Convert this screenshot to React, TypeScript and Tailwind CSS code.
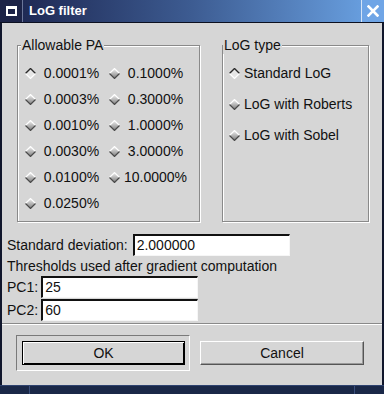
import React from "react";

function Diamond({ on }: { on?: boolean }) {
  return (
    <svg width="11" height="11" viewBox="0 0 11 11" className="shrink-0">
      <defs>
        <linearGradient id="dg" x1="0" y1="0" x2="0" y2="1">
          <stop offset="0" stopColor="#f2f2f2" />
          <stop offset="1" stopColor="#7c7c7c" />
        </linearGradient>
      </defs>
      {on ? (
        <>
          <polygon points="5.5,0.5 10.5,5.5 5.5,10.5 0.5,5.5" fill="#e6e6e6" />
          <polyline points="0.5,5.5 5.5,0.5 10.5,5.5" fill="none" stroke="#2a2a2a" strokeWidth="1.4" />
          <polyline points="0.5,5.5 5.5,10.5 10.5,5.5" fill="none" stroke="#ffffff" strokeWidth="1.2" />
        </>
      ) : (
        <>
          <polygon points="5.5,0.5 10.5,5.5 5.5,10.5 0.5,5.5" fill="url(#dg)" />
          <polyline points="0.5,5.5 5.5,0.5 10.5,5.5" fill="none" stroke="#ffffff" strokeWidth="1.2" />
          <polyline points="0.5,5.5 5.5,10.5 10.5,5.5" fill="none" stroke="#4a4a4a" strokeWidth="1.2" />
        </>
      )}
    </svg>
  );
}

function PaCell({ label, on }: { label: string; on?: boolean }) {
  return (
    <div className="flex items-center h-[26px]">
      <Diamond on={on} />
      <span className="ml-[2px] w-[67px] text-center whitespace-nowrap">{label}</span>
    </div>
  );
}

function TypeRow({ label, on }: { label: string; on?: boolean }) {
  return (
    <div className="flex items-center h-[31px] gap-[4px]">
      <Diamond on={on} />
      <span className="whitespace-nowrap">{label}</span>
    </div>
  );
}

function Field({ value, w }: { value: string; w: string }) {
  return (
    <div
      className={`${w} h-[22px] bg-white border-t-2 border-l-2 border-r border-b border-t-[#111] border-l-[#111] border-r-[#f6f6f6] border-b-[#f6f6f6] pl-[2px] leading-[19px] whitespace-nowrap`}
    >
      {value}
    </div>
  );
}

export default function App() {
  const col1 = ["0.0001%", "0.0003%", "0.0010%", "0.0030%", "0.0100%", "0.0250%"];
  const col2 = ["0.1000%", "0.3000%", "1.0000%", "3.0000%", "10.0000%"];
  return (
    <div className="w-[384px] h-[394px] flex flex-col bg-[#d6d6d6] text-[14px] text-[#111] font-['Liberation_Sans',Arial,sans-serif] overflow-hidden">
      {/* title bar */}
      <div className="h-[23px] flex border-b border-[#0c1020] shrink-0">
        <div className="w-[23px] h-[22px] bg-[#1c2347] border-r border-[#6b7699] flex items-center justify-center">
          <div className="w-[11px] h-[10px] border-2 border-t-[3px] border-white" />
        </div>
        <div className="flex-1 h-[22px] bg-gradient-to-r from-[#1f2a55] via-[#3d5c92] to-[#679ddd] flex items-center pl-[6px] text-white font-bold text-[13px] font-['Liberation_Sans',Arial,sans-serif]">
          LoG filter
        </div>
        <div className="w-[23px] h-[22px] bg-[#6fa5e6] border-l border-[#d6e4f6] flex items-center justify-center">
          <svg width="12" height="12" viewBox="0 0 12 12">
            <path d="M1.5 1.5 L10.5 10.5 M10.5 1.5 L1.5 10.5" stroke="#ffffff" strokeWidth="2.6" strokeLinecap="square" />
          </svg>
        </div>
      </div>

      {/* body */}
      <div className="flex-1 flex flex-col border-l-2 border-r-2 border-[#10162c]">
        <div className="flex mt-[22px] ml-[15px] gap-[22px]">
          <div className="relative w-[183px] h-[177px] border border-[#8a8a8a] shadow-[1px_1px_0_#ffffff,inset_1px_1px_0_#ffffff] pl-[7px] pt-[14px]">
            <span className="absolute -top-[9px] left-[3px] px-px bg-[#d6d6d6] leading-[17px]">Allowable PA</span>
            <div className="flex gap-[4px]">
              <div className="flex flex-col">
                {col1.map((l, i) => (
                  <PaCell key={l} label={l} on={i === 0} />
                ))}
              </div>
              <div className="flex flex-col">
                {col2.map((l) => (
                  <PaCell key={l} label={l} />
                ))}
              </div>
            </div>
          </div>
          <div className="relative w-[147px] h-[177px] border border-[#8a8a8a] shadow-[1px_1px_0_#ffffff,inset_1px_1px_0_#ffffff] pl-[6px] pt-[12px]">
            <span className="absolute -top-[9px] left-[0px] px-px bg-[#d6d6d6] leading-[17px]">LoG type</span>
            <TypeRow label="Standard LoG" on />
            <TypeRow label="LoG with Roberts" />
            <TypeRow label="LoG with Sobel" />
          </div>
        </div>

        <div className="flex items-center mt-[12px] ml-[5px] gap-[5px]">
          <span className="whitespace-nowrap">Standard deviation:</span>
          <Field value="2.000000" w="w-[157px]" />
        </div>
        <div className="ml-[5px] h-[20px] leading-[20px] whitespace-nowrap">Thresholds used after gradient computation</div>
        <div className="flex items-center ml-[5px] gap-[3px]">
          <span>PC1:</span>
          <Field value="25" w="w-[157px]" />
        </div>
        <div className="flex items-center ml-[5px] gap-[3px] mt-[1px]">
          <span>PC2:</span>
          <Field value="60" w="w-[157px]" />
        </div>

        <div className="mt-[2px] h-[2px] border-t border-b border-t-[#8a8a8a] border-b-white" />

        <div className="flex mt-[10px] ml-[14px]">
          <div className="w-[174px] h-[36px] border border-t-[#7a7a7a] border-l-[#7a7a7a] border-r-white border-b-white pl-[5px] pt-[5px]">
            <div className="w-[163px] h-[24px] border border-black shadow-[inset_1px_1px_0_#ffffff,inset_-1px_-1px_0_#000000] flex items-center justify-center">
              OK
            </div>
          </div>
          <div className="ml-[10px] mt-[6px] w-[164px] h-[24px] border border-t-white border-l-white border-r-[#555] border-b-[#555] shadow-[inset_-1px_-1px_0_#9a9a9a] flex items-center justify-center">
            Cancel
          </div>
        </div>
      </div>

      {/* bottom frame */}
      <div className="h-[9px] shrink-0 flex bg-[#1a2848] border-t border-[#2f4370]">
        <div className="w-[30px] border-r border-[#3a4f7c]" />
        <div className="flex-1 border-r border-[#3a4f7c]" />
        <div className="w-[29px]" />
      </div>
    </div>
  );
}
